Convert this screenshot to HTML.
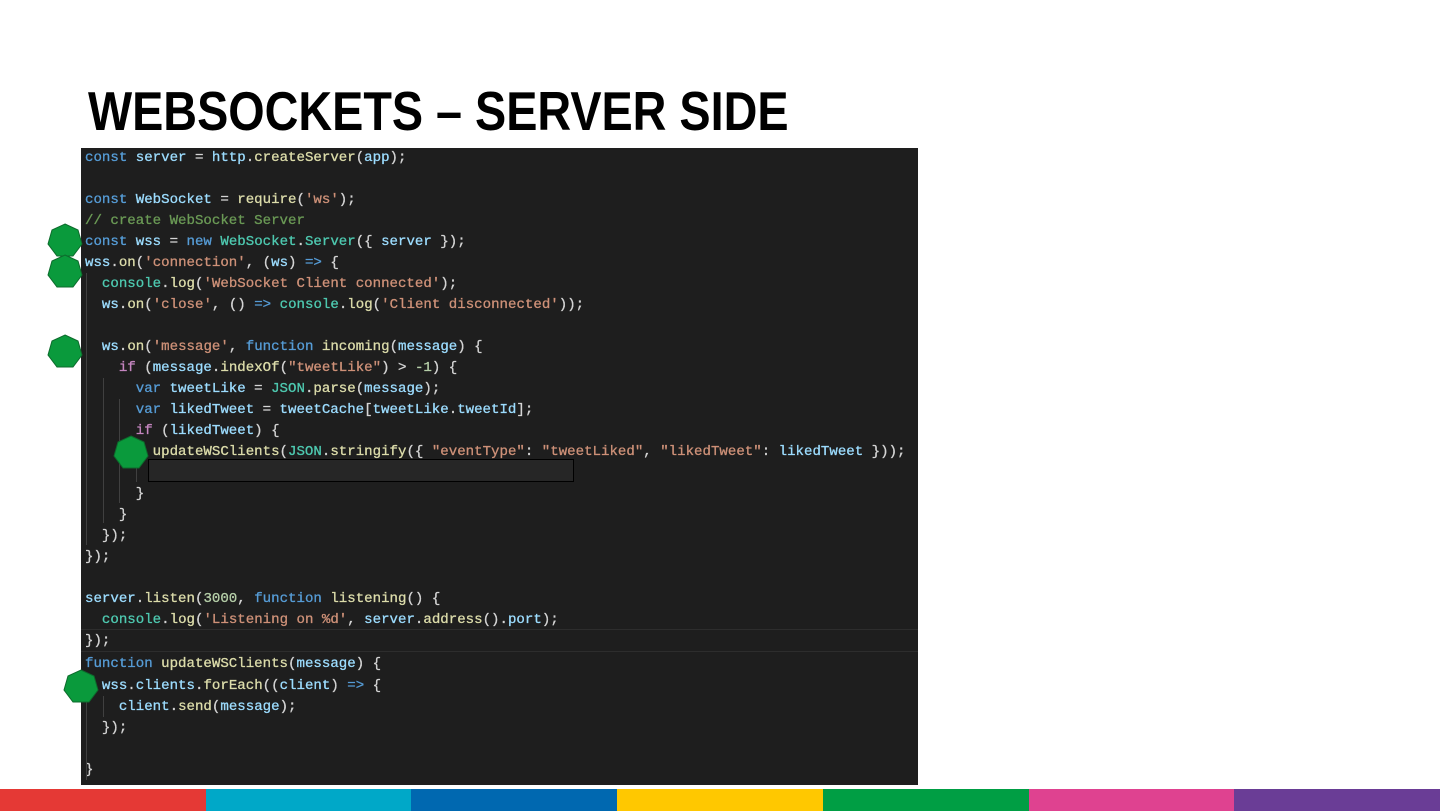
<!DOCTYPE html>
<html><head><meta charset="utf-8"><style>
html,body{margin:0;padding:0;background:#fff;width:1440px;height:811px;overflow:hidden;position:relative}
h1{position:absolute;left:88px;top:78px;margin:0;font:bold 55px/66px "Liberation Sans",sans-serif;color:#000;transform:scaleX(0.85);transform-origin:0 0;white-space:nowrap;letter-spacing:0}
#code{position:absolute;left:81px;top:148px;width:837px;height:637px;background:#1e1e1e;overflow:hidden}
.l{position:absolute;left:4px;margin-top:1px;font:14.1px/21px "Liberation Mono","DejaVu Sans Mono",monospace;color:#d4d4d4;white-space:pre;-webkit-text-stroke:0.3px currentColor}
.k{color:#569cd6}.v{color:#9cdcfe}.f{color:#dcdcaa}.s{color:#ce9178}.c{color:#6a9955}.t{color:#4ec9b0}.p{color:#c586c0}.n{color:#b5cea8}
.g{position:absolute;width:1px;background:#404040}
.bars{position:absolute;left:0;top:789px;height:22px;width:1440px;display:flex}
.bars div{flex:1;height:22px}
</style></head><body>
<h1>WEBSOCKETS – SERVER SIDE</h1>
<div id="code">
<div class="l" style="top:-1px"><span class="k">const</span> <span class="v">server</span> = <span class="v">http</span>.<span class="f">createServer</span>(<span class="v">app</span>);</div>
<div class="l" style="top:41px"><span class="k">const</span> <span class="v">WebSocket</span> = <span class="f">require</span>(<span class="s">'ws'</span>);</div>
<div class="l" style="top:62px"><span class="c">// create WebSocket Server</span></div>
<div class="l" style="top:83px"><span class="k">const</span> <span class="v">wss</span> = <span class="k">new</span> <span class="t">WebSocket</span>.<span class="t">Server</span>({ <span class="v">server</span> });</div>
<div class="l" style="top:104px"><span class="v">wss</span>.<span class="f">on</span>(<span class="s">'connection'</span>, (<span class="v">ws</span>) <span class="k">=&gt;</span> {</div>
<div class="l" style="top:125px">  <span class="t">console</span>.<span class="f">log</span>(<span class="s">'WebSocket Client connected'</span>);</div>
<div class="l" style="top:146px">  <span class="v">ws</span>.<span class="f">on</span>(<span class="s">'close'</span>, () <span class="k">=&gt;</span> <span class="t">console</span>.<span class="f">log</span>(<span class="s">'Client disconnected'</span>));</div>
<div class="l" style="top:188px">  <span class="v">ws</span>.<span class="f">on</span>(<span class="s">'message'</span>, <span class="k">function</span> <span class="f">incoming</span>(<span class="v">message</span>) {</div>
<div class="l" style="top:209px">    <span class="p">if</span> (<span class="v">message</span>.<span class="f">indexOf</span>(<span class="s">"tweetLike"</span>) &gt; <span class="n">-1</span>) {</div>
<div class="l" style="top:230px">      <span class="k">var</span> <span class="v">tweetLike</span> = <span class="t">JSON</span>.<span class="f">parse</span>(<span class="v">message</span>);</div>
<div class="l" style="top:251px">      <span class="k">var</span> <span class="v">likedTweet</span> = <span class="v">tweetCache</span>[<span class="v">tweetLike</span>.<span class="v">tweetId</span>];</div>
<div class="l" style="top:272px">      <span class="p">if</span> (<span class="v">likedTweet</span>) {</div>
<div class="l" style="top:293px">        <span class="f">updateWSClients</span>(<span class="t">JSON</span>.<span class="f">stringify</span>({ <span class="s">"eventType"</span>: <span class="s">"tweetLiked"</span>, <span class="s">"likedTweet"</span>: <span class="v">likedTweet</span> }));</div>
<div style="position:absolute;left:67px;top:311px;width:424px;height:21px;border:1px solid #000;background:#262626"></div>
<div class="l" style="top:335px">      }</div>
<div class="l" style="top:356px">    }</div>
<div class="l" style="top:377px">  });</div>
<div class="l" style="top:398px">});</div>
<div class="l" style="top:440px"><span class="v">server</span>.<span class="f">listen</span>(<span class="n">3000</span>, <span class="k">function</span> <span class="f">listening</span>() {</div>
<div class="l" style="top:461px">  <span class="t">console</span>.<span class="f">log</span>(<span class="s">'Listening on %d'</span>, <span class="v">server</span>.<span class="f">address</span>().<span class="v">port</span>);</div>
<div style="position:absolute;left:0;top:481px;width:837px;height:21px;border-top:1px solid #2d2d2d;border-bottom:1px solid #2d2d2d"></div>
<div class="l" style="top:482px">});</div>
<div class="l" style="top:505px"><span class="k">function</span> <span class="f">updateWSClients</span>(<span class="v">message</span>) {</div>
<div class="l" style="top:527px">  <span class="v">wss</span>.<span class="v">clients</span>.<span class="f">forEach</span>((<span class="v">client</span>) <span class="k">=&gt;</span> {</div>
<div class="l" style="top:548px">    <span class="v">client</span>.<span class="f">send</span>(<span class="v">message</span>);</div>
<div class="l" style="top:569px">  });</div>
<div class="l" style="top:611px">}</div>
<div class="g" style="left:5px;top:125px;height:272px"></div>
<div class="g" style="left:22px;top:230px;height:145px"></div>
<div class="g" style="left:38px;top:251px;height:104px"></div>
<div class="g" style="left:55px;top:314px;height:20px"></div>
<div class="g" style="left:5px;top:548px;height:84px"></div>
<div class="g" style="left:22px;top:548px;height:21px"></div>
</div>
<svg style="position:absolute;left:0;top:0" width="1440" height="811">
<g fill="#0a9a3c" stroke="#0d6b2c" stroke-width="1">
<polygon points="65,224 78,230 82,244 73,256 57,256 48,244 52,230"/>
<polygon points="65,255 78,261 82,275 73,287 57,287 48,275 52,261"/>
<polygon points="65,335 78,341 82,355 73,367 57,367 48,355 52,341"/>
<polygon points="131,436 144,442 148,456 139,468 123,468 114,456 118,442"/>
<polygon points="81,670 94,676 98,690 89,702 73,702 64,690 68,676"/>
</g></svg>
<div class="bars"><div style="background:#e53935"></div><div style="background:#00a8c8"></div><div style="background:#0068b0"></div><div style="background:#ffc800"></div><div style="background:#009e44"></div><div style="background:#df4290"></div><div style="background:#6a3d96"></div></div>
</body></html>
